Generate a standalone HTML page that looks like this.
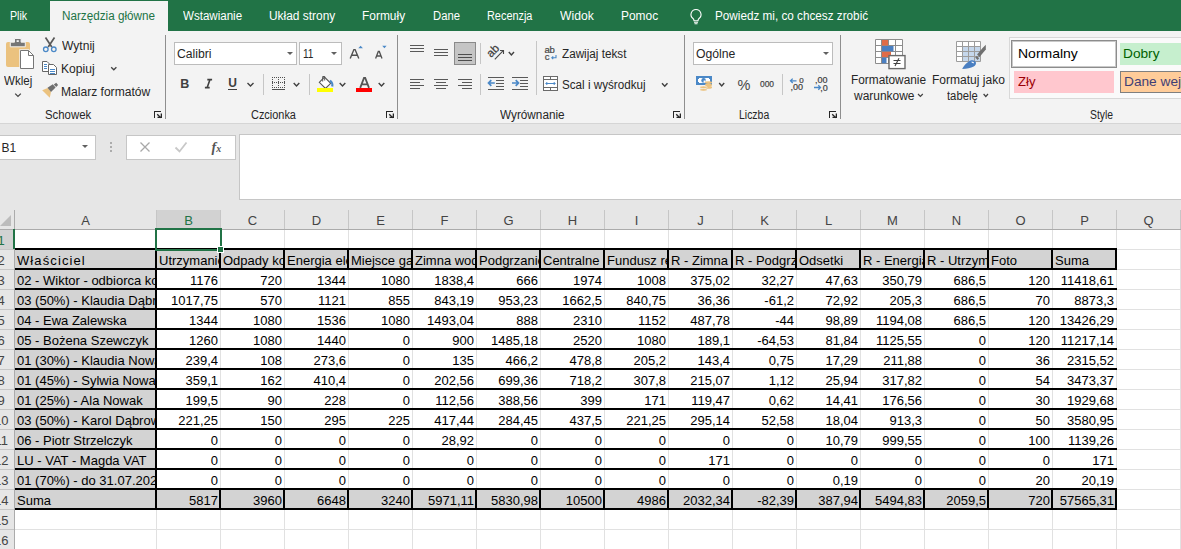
<!DOCTYPE html>
<html><head><meta charset="utf-8">
<style>
html,body{margin:0;padding:0}
body{width:1181px;height:549px;overflow:hidden;position:relative;background:#e6e6e6;font-family:"Liberation Sans", sans-serif;}
.a{position:absolute;white-space:nowrap}
</style></head><body>
<div class="a" style="left:0px;top:0px;width:1181px;height:31px;background:#217346;"></div>
<div class="a" style="left:50px;top:1px;width:118px;height:30px;background:#f3f3f3;"></div>
<div class="a" style="left:0px;top:31px;width:1181px;height:92px;background:#f3f3f3;"></div>
<div class="a" style="left:0px;top:123px;width:1181px;height:1px;background:#d5d5d5;"></div>
<div class="a" style="left:9.62px;top:9.84px;font-size:12px;line-height:12px;color:#ffffff;transform:scaleX(0.8900);transform-origin:0 0;">Plik</div>
<div class="a" style="left:62.20px;top:9.84px;font-size:12px;line-height:12px;color:#217346;transform:scaleX(0.9747);transform-origin:0 0;">Narzędzia główne</div>
<div class="a" style="left:182.59px;top:9.84px;font-size:12px;line-height:12px;color:#ffffff;transform:scaleX(0.9629);transform-origin:0 0;">Wstawianie</div>
<div class="a" style="left:268.79px;top:9.84px;font-size:12px;line-height:12px;color:#ffffff;transform:scaleX(0.9939);transform-origin:0 0;">Układ strony</div>
<div class="a" style="left:362.00px;top:9.84px;font-size:12px;line-height:12px;color:#ffffff;transform:scaleX(0.9955);transform-origin:0 0;">Formuły</div>
<div class="a" style="left:433.03px;top:9.84px;font-size:12px;line-height:12px;color:#ffffff;transform:scaleX(0.9393);transform-origin:0 0;">Dane</div>
<div class="a" style="left:487.23px;top:9.84px;font-size:12px;line-height:12px;color:#ffffff;transform:scaleX(0.9080);transform-origin:0 0;">Recenzja</div>
<div class="a" style="left:559.79px;top:9.84px;font-size:12px;line-height:12px;color:#ffffff;transform:scaleX(1.0118);transform-origin:0 0;">Widok</div>
<div class="a" style="left:621.00px;top:9.84px;font-size:12px;line-height:12px;color:#ffffff;transform:scaleX(0.9946);transform-origin:0 0;">Pomoc</div>
<svg class="a" style="left:688px;top:8px;" width="16" height="17" viewBox="0 0 16 17"><path d="M8 1.5a5 5 0 0 0-3 9c.8.7 1 1.4 1 2.3h4c0-.9.2-1.6 1-2.3a5 5 0 0 0-3-9z" fill="none" stroke="#fff" stroke-width="1.1"/><path d="M6 14.2h4M6.5 15.8h3" stroke="#fff" stroke-width="1.1"/></svg>
<div class="a" style="left:715.20px;top:9.84px;font-size:12px;line-height:12px;color:#ffffff;transform:scaleX(0.9769);transform-origin:0 0;">Powiedz mi, co chcesz zrobić</div>
<div class="a" style="left:165px;top:35px;width:1px;height:84px;background:#8e8e8e;"></div>
<div class="a" style="left:397px;top:35px;width:1px;height:84px;background:#8e8e8e;"></div>
<div class="a" style="left:684px;top:35px;width:1px;height:84px;background:#8e8e8e;"></div>
<div class="a" style="left:840px;top:35px;width:1px;height:84px;background:#8e8e8e;"></div>
<svg class="a" style="left:0px;top:34px" width="40" height="38" viewBox="0 34 40 38"><rect x="6" y="42" width="24" height="25" rx="2" fill="#ebc27f"/><path d="M10.3 46.8V42.2h4.2V38.5h6.6v3.7h4.2v4.6z" fill="#767676" stroke="#f3f3f3" stroke-width="1"/><rect x="16.6" y="40.2" width="2.2" height="1.8" fill="#f3f3f3"/><path d="M20.5 50.5h8l5 5v13h-13z" fill="#fff" stroke="#f3f3f3" stroke-width="2.4"/><path d="M20.5 50.5h8l5 5v13h-13z" fill="#fff" stroke="#767676"/><path d="M28.5 50.5v5h5" fill="none" stroke="#767676"/></svg>
<div class="a" style="left:4.17px;top:74.64px;font-size:12px;line-height:12px;color:#262626;transform:scaleX(0.9633);transform-origin:0 0;">Wklej</div>
<svg class="a" style="left:12px;top:90px" width="12" height="10" viewBox="12 90 12 10"><path d="M15.2 93.6l2.8 2.8 2.8-2.8" fill="none" stroke="#444" stroke-width="1.3"/></svg>
<svg class="a" style="left:40px;top:35px" width="20" height="20" viewBox="40 35 20 20"><path d="M45.5 37.5L51.8 47M54.5 37.5L48.2 47" stroke="#595959" stroke-width="1.7"/><circle cx="45.8" cy="49.3" r="2.3" fill="none" stroke="#4a88c7" stroke-width="1.3"/><circle cx="53.8" cy="49.3" r="2.3" fill="none" stroke="#4a88c7" stroke-width="1.3"/></svg>
<div class="a" style="left:62.00px;top:39.84px;font-size:12px;line-height:12px;color:#262626;transform:scaleX(1.0061);transform-origin:0 0;">Wytnij</div>
<svg class="a" style="left:40px;top:59px" width="20" height="19" viewBox="40 59 20 19"><path d="M42.5 61.5h4.5l2.5 2.5v7.5h-7z" fill="#fff" stroke="#666"/><path d="M44 64.5h3M44 66.5h3M44 68.5h3" stroke="#4a88c7"/><path d="M48.5 64.5h5l3 3v7h-8z" fill="#fff" stroke="#666"/><path d="M50 69.5h5M50 71.5h5M50 73.5h5" stroke="#4a88c7"/></svg>
<div class="a" style="left:61.00px;top:62.84px;font-size:12px;line-height:12px;color:#262626;transform:scaleX(1.0061);transform-origin:0 0;">Kopiuj</div>
<svg class="a" style="left:108px;top:64px" width="12" height="9" viewBox="108 64 12 9"><path d="M111.2 67.2l2.6 2.6 2.6-2.6" fill="none" stroke="#444" stroke-width="1.3"/></svg>
<svg class="a" style="left:40px;top:82px" width="20" height="18" viewBox="40 82 20 18"><path d="M42.2 90.2l5.5-2.2 3.3 3.8-1.2 6z" fill="#ebc27f"/><path d="M47.5 87.8l5.3-3.6 2.8 3.4-4.6 4.4z" fill="#6f6f6f"/><path d="M53.8 84.6l2.4-1.8 1.9 2.3-1.9 2z" fill="#6f6f6f"/></svg>
<div class="a" style="left:61.00px;top:85.64px;font-size:12px;line-height:12px;color:#262626;transform:scaleX(1.0056);transform-origin:0 0;">Malarz formatów</div>
<div class="a" style="left:45.43px;top:108.84px;font-size:12px;line-height:12px;color:#262626;transform:scaleX(0.9479);transform-origin:0 0;">Schowek</div>
<svg class="a" style="left:153px;top:110px" width="11" height="11" viewBox="153 110 11 11"><path d="M154 111h7v1h-6v6h-1z" fill="#262626"/><path d="M157.2 114.2L160.8 117.8" stroke="#262626" stroke-width="1.3"/><path d="M157.5 118h4.5v-4.5h-1.3v3.2h-3.2z" fill="#262626"/></svg>
<div class="a" style="left:174px;top:42px;width:123px;height:23px;background:#fff;border:1px solid #bcbcbc;box-sizing:border-box;"></div>
<div class="a" style="left:176.78px;top:47.84px;font-size:12px;line-height:12px;color:#262626;transform:scaleX(1.0152);transform-origin:0 0;">Calibri</div>
<svg class="a" style="left:285.5px;top:51px;" width="8" height="5" viewBox="0 0 8 5"><path d="M1 1h6l-3 3z" fill="#606060"/></svg>
<div class="a" style="left:299px;top:42px;width:43px;height:23px;background:#fff;border:1px solid #bcbcbc;box-sizing:border-box;"></div>
<div class="a" style="left:303.00px;top:47.84px;font-size:12px;line-height:12px;color:#262626;transform:scaleX(0.8417);transform-origin:0 0;">11</div>
<svg class="a" style="left:330px;top:51px;" width="8" height="5" viewBox="0 0 8 5"><path d="M1 1h6l-3 3z" fill="#606060"/></svg>
<svg class="a" style="left:346px;top:42px" width="46" height="20" viewBox="346 42 46 20"><path d="M350.2 58.6L353.9 49.6h1.2l3.7 9M351.7 55.3h5.6" fill="none" stroke="#505050" stroke-width="1.4"/><path d="M358.3 48.3l2.3-2.6 2.3 2.6z" fill="#4a88c7"/><path d="M375.6 58.6L378.3 51.4h1l2.7 7.2M376.8 56h4.2" fill="none" stroke="#505050" stroke-width="1.3"/><path d="M382.2 45.8h4.4l-2.2 2.4z" fill="#4a88c7"/></svg>
<div class="a" style="left:180.30px;top:77.62px;font-size:12.5px;line-height:12.5px;color:#404040;font-weight:bold">B</div>
<div class="a" style="left:0.00px;top:-10.16px;font-size:12px;line-height:12px;color:#262626;"></div>
<svg class="a" style="left:203px;top:77px" width="11" height="13" viewBox="203 77 11 13"><path d="M207.3 79.6h4.8M204.9 87.6h4.8M210 79.6L207.2 87.6" fill="none" stroke="#404040" stroke-width="1.6"/></svg>
<div class="a" style="left:228.20px;top:77.44px;font-size:12px;line-height:12px;color:#404040;font-weight:bold">U</div>
<div class="a" style="left:228px;top:89px;width:9px;height:1px;background:#404040;"></div>
<svg class="a" style="left:245px;top:81px" width="11" height="8" viewBox="245 81 11 8"><path d="M247.5 83L250.5 86L253.5 83" fill="none" stroke="#404040" stroke-width="1.4"/></svg>
<div class="a" style="left:263px;top:74px;width:1px;height:21px;background:#c6c6c6;"></div>
<svg class="a" style="left:270px;top:75px" width="18" height="17" viewBox="270 75 18 17"><rect x="272" y="77" width="1" height="1" fill="#505050"/><rect x="274" y="77" width="1" height="1" fill="#505050"/><rect x="276" y="77" width="1" height="1" fill="#505050"/><rect x="278" y="77" width="1" height="1" fill="#505050"/><rect x="280" y="77" width="1" height="1" fill="#505050"/><rect x="282" y="77" width="1" height="1" fill="#505050"/><rect x="284" y="77" width="1" height="1" fill="#505050"/><rect x="272" y="82" width="1" height="1" fill="#505050"/><rect x="274" y="82" width="1" height="1" fill="#505050"/><rect x="276" y="82" width="1" height="1" fill="#505050"/><rect x="278" y="82" width="1" height="1" fill="#505050"/><rect x="280" y="82" width="1" height="1" fill="#505050"/><rect x="282" y="82" width="1" height="1" fill="#505050"/><rect x="284" y="82" width="1" height="1" fill="#505050"/><rect x="272" y="87" width="1" height="1" fill="#505050"/><rect x="274" y="87" width="1" height="1" fill="#505050"/><rect x="276" y="87" width="1" height="1" fill="#505050"/><rect x="278" y="87" width="1" height="1" fill="#505050"/><rect x="280" y="87" width="1" height="1" fill="#505050"/><rect x="282" y="87" width="1" height="1" fill="#505050"/><rect x="284" y="87" width="1" height="1" fill="#505050"/><rect x="272" y="77" width="1" height="1" fill="#505050"/><rect x="272" y="79" width="1" height="1" fill="#505050"/><rect x="272" y="81" width="1" height="1" fill="#505050"/><rect x="272" y="83" width="1" height="1" fill="#505050"/><rect x="272" y="85" width="1" height="1" fill="#505050"/><rect x="272" y="87" width="1" height="1" fill="#505050"/><rect x="278" y="77" width="1" height="1" fill="#505050"/><rect x="278" y="79" width="1" height="1" fill="#505050"/><rect x="278" y="81" width="1" height="1" fill="#505050"/><rect x="278" y="83" width="1" height="1" fill="#505050"/><rect x="278" y="85" width="1" height="1" fill="#505050"/><rect x="278" y="87" width="1" height="1" fill="#505050"/><rect x="284" y="77" width="1" height="1" fill="#505050"/><rect x="284" y="79" width="1" height="1" fill="#505050"/><rect x="284" y="81" width="1" height="1" fill="#505050"/><rect x="284" y="83" width="1" height="1" fill="#505050"/><rect x="284" y="85" width="1" height="1" fill="#505050"/><rect x="284" y="87" width="1" height="1" fill="#505050"/><rect x="272" y="89" width="13" height="1" fill="#505050"/></svg>
<svg class="a" style="left:291px;top:81px" width="11" height="8" viewBox="291 81 11 8"><path d="M293.7 83L296.5 86L299.3 83" fill="none" stroke="#404040" stroke-width="1.4"/></svg>
<div class="a" style="left:309px;top:74px;width:1px;height:21px;background:#c6c6c6;"></div>
<svg class="a" style="left:315px;top:74px" width="21" height="19" viewBox="315 74 21 19"><path d="M319.3 82.3l5.2-5.2 6.2 6.2-5.2 5.2z" fill="#fff" stroke="#555" stroke-width="1.1"/><path d="M322.7 81.5V76.5h2v4" fill="none" stroke="#555" stroke-width="1"/><path d="M330 80.5q3 2.5 2.2 6" fill="none" stroke="#4a88c7" stroke-width="2.2"/><rect x="317" y="88" width="16" height="4" fill="#ffff00"/></svg>
<svg class="a" style="left:337px;top:81px" width="11" height="8" viewBox="337 81 11 8"><path d="M339.7 83L342.5 86L345.3 83" fill="none" stroke="#404040" stroke-width="1.4"/></svg>
<svg class="a" style="left:354px;top:74px" width="20" height="19" viewBox="354 74 20 19"><path d="M360.2 87.8L364 78h1.2l3.8 9.8M361.6 84.3h6" fill="none" stroke="#555" stroke-width="1.8"/><rect x="356" y="88" width="16" height="4" fill="#ff0000"/></svg>
<svg class="a" style="left:376px;top:81px" width="11" height="8" viewBox="376 81 11 8"><path d="M378.7 83L381.5 86L384.3 83" fill="none" stroke="#404040" stroke-width="1.4"/></svg>
<div class="a" style="left:250.57px;top:108.84px;font-size:12px;line-height:12px;color:#262626;transform:scaleX(0.9100);transform-origin:0 0;">Czcionka</div>
<svg class="a" style="left:385px;top:110px" width="11" height="11" viewBox="385 110 11 11"><path d="M386 111h7v1h-6v6h-1z" fill="#262626"/><path d="M389.2 114.2L392.8 117.8" stroke="#262626" stroke-width="1.3"/><path d="M389.5 118h4.5v-4.5h-1.3v3.2h-3.2z" fill="#262626"/></svg>
<div class="a" style="left:410px;top:45px;width:14px;height:1px;background:#595959"></div>
<div class="a" style="left:410px;top:48px;width:14px;height:1px;background:#595959"></div>
<div class="a" style="left:410px;top:51px;width:14px;height:1px;background:#595959"></div>
<div class="a" style="left:434px;top:49px;width:14px;height:1px;background:#595959"></div>
<div class="a" style="left:434px;top:52px;width:14px;height:1px;background:#595959"></div>
<div class="a" style="left:434px;top:55px;width:14px;height:1px;background:#595959"></div>
<div class="a" style="left:454px;top:42px;width:22px;height:23px;background:#c5c5c5;border:1px solid #8a8a8a;box-sizing:border-box;"></div>
<div class="a" style="left:458px;top:54px;width:14px;height:1px;background:#4d4d4d"></div>
<div class="a" style="left:458px;top:57px;width:14px;height:1px;background:#4d4d4d"></div>
<div class="a" style="left:458px;top:60px;width:14px;height:1px;background:#4d4d4d"></div>
<div class="a" style="left:480px;top:43px;width:1px;height:21px;background:#c6c6c6;"></div>
<svg class="a" style="left:484px;top:42px" width="34" height="22" viewBox="484 42 34 22"><g transform="translate(492.8 50.6) rotate(-45)"><text x="-6.5" y="4" font-family="Liberation Sans" font-size="11.5" fill="#404040" stroke="#404040" stroke-width="0.25">ab</text></g><path d="M494.8 59.3L503.2 50.7" stroke="#474747" stroke-width="1.1"/><path d="M500 50.5h3.5v3.5" fill="none" stroke="#474747" stroke-width="1.1"/></svg>
<svg class="a" style="left:506px;top:50px" width="11" height="8" viewBox="506 50 11 8"><path d="M508.8 52L511.4 55L514 52" fill="none" stroke="#404040" stroke-width="1.4"/></svg>
<div class="a" style="left:536px;top:41px;width:1px;height:54px;background:#c6c6c6;"></div>
<svg class="a" style="left:543px;top:44px" width="17" height="18" viewBox="543 44 17 18"><text x="544.6" y="52.6" font-family="Liberation Sans" font-size="9.5" fill="#474747" stroke="#474747" stroke-width="0.2" letter-spacing="-0.4">ab</text><text x="544.8" y="59.7" font-family="Liberation Sans" font-size="9.5" fill="#474747" stroke="#474747" stroke-width="0.2">c</text><path d="M556 55v2.8h-3.5M553.2 56.4l-1.4 1.4 1.4 1.4" fill="none" stroke="#4a88c7" stroke-width="1.1"/></svg>
<div class="a" style="left:562.19px;top:47.84px;font-size:12px;line-height:12px;color:#262626;transform:scaleX(0.9758);transform-origin:0 0;">Zawijaj tekst</div>
<div class="a" style="left:410px;top:79px;width:14px;height:1px;background:#595959"></div>
<div class="a" style="left:434px;top:79px;width:14px;height:1px;background:#595959"></div>
<div class="a" style="left:458px;top:79px;width:14px;height:1px;background:#595959"></div>
<div class="a" style="left:410px;top:82px;width:10px;height:1px;background:#595959"></div>
<div class="a" style="left:436px;top:82px;width:10px;height:1px;background:#595959"></div>
<div class="a" style="left:462px;top:82px;width:10px;height:1px;background:#595959"></div>
<div class="a" style="left:410px;top:85px;width:14px;height:1px;background:#595959"></div>
<div class="a" style="left:434px;top:85px;width:14px;height:1px;background:#595959"></div>
<div class="a" style="left:458px;top:85px;width:14px;height:1px;background:#595959"></div>
<div class="a" style="left:410px;top:88px;width:10px;height:1px;background:#595959"></div>
<div class="a" style="left:436px;top:88px;width:10px;height:1px;background:#595959"></div>
<div class="a" style="left:462px;top:88px;width:10px;height:1px;background:#595959"></div>
<div class="a" style="left:480px;top:74px;width:1px;height:21px;background:#c6c6c6;"></div>
<div class="a" style="left:488px;top:77px;width:16px;height:1px;background:#595959"></div>
<div class="a" style="left:496px;top:80px;width:8px;height:1px;background:#595959"></div>
<div class="a" style="left:496px;top:83px;width:8px;height:1px;background:#595959"></div>
<div class="a" style="left:496px;top:86px;width:8px;height:1px;background:#595959"></div>
<div class="a" style="left:488px;top:89px;width:16px;height:1px;background:#595959"></div>
<div class="a" style="left:512px;top:77px;width:16px;height:1px;background:#595959"></div>
<div class="a" style="left:520px;top:80px;width:8px;height:1px;background:#595959"></div>
<div class="a" style="left:520px;top:83px;width:8px;height:1px;background:#595959"></div>
<div class="a" style="left:520px;top:86px;width:8px;height:1px;background:#595959"></div>
<div class="a" style="left:512px;top:89px;width:16px;height:1px;background:#595959"></div>
<svg class="a" style="left:486px;top:76px" width="44" height="14" viewBox="486 76 44 14"><path d="M488.3 83h6.5M491.3 80.2L488.5 83l2.8 2.8" fill="none" stroke="#4a88c7" stroke-width="1.7"/><path d="M512 83h6.5M515.7 80.2l2.8 2.8-2.8 2.8" fill="none" stroke="#4a88c7" stroke-width="1.7"/></svg>
<svg class="a" style="left:541px;top:74px" width="20" height="19" viewBox="541 74 20 19"><rect x="543.5" y="76.5" width="14" height="14" fill="#fff" stroke="#6a6a6a"/><path d="M543.5 79.5h14M543.5 87.5h14M550.5 76.5v3M550.5 87.5v3" stroke="#6a6a6a"/><path d="M546 83.5h9M547.3 82l-1.5 1.5 1.5 1.5M553.7 82l1.5 1.5-1.5 1.5" fill="none" stroke="#4a88c7"/></svg>
<div class="a" style="left:562.19px;top:78.84px;font-size:12px;line-height:12px;color:#262626;transform:scaleX(0.9721);transform-origin:0 0;">Scal i wyśrodkuj</div>
<svg class="a" style="left:660px;top:81px" width="10" height="8" viewBox="660 81 10 8"><path d="M662 83.2L664.75 86.2L667.5 83.2" fill="none" stroke="#404040" stroke-width="1.4"/></svg>
<div class="a" style="left:500.00px;top:108.84px;font-size:12px;line-height:12px;color:#262626;transform:scaleX(0.9803);transform-origin:0 0;">Wyrównanie</div>
<svg class="a" style="left:672px;top:110px" width="11" height="11" viewBox="672 110 11 11"><path d="M673 111h7v1h-6v6h-1z" fill="#262626"/><path d="M676.2 114.2L679.8 117.8" stroke="#262626" stroke-width="1.3"/><path d="M676.5 118h4.5v-4.5h-1.3v3.2h-3.2z" fill="#262626"/></svg>
<div class="a" style="left:693px;top:42px;width:140px;height:23px;background:#fff;border:1px solid #bcbcbc;box-sizing:border-box;"></div>
<div class="a" style="left:695.78px;top:47.84px;font-size:12px;line-height:12px;color:#262626;transform:scaleX(1.0184);transform-origin:0 0;">Ogólne</div>
<svg class="a" style="left:821.5px;top:51px;" width="8" height="5" viewBox="0 0 8 5"><path d="M1 1h6l-3 3z" fill="#606060"/></svg>
<svg class="a" style="left:694px;top:74px" width="20" height="20" viewBox="694 74 20 20"><path d="M697 77h14v7h-14z" fill="#fff" stroke="#4a88c7" stroke-width="2"/><path d="M696 76h3v3h-3zM709 76h3v3h-3zM696 82h3v3h-3zM709 82h3v3h-3z" fill="#4a88c7"/><circle cx="703.6" cy="80.4" r="2.3" fill="#4a88c7"/><path d="M703.6 80.4h2.3a2.3 2.3 0 0 1-2.3 2.3z" fill="#fff"/><ellipse cx="708.5" cy="82.6" rx="3.6" ry="1.3" fill="#ebc27f"/><ellipse cx="708.5" cy="85" rx="3.6" ry="1.3" fill="#ebc27f"/><ellipse cx="708.5" cy="87.4" rx="3.6" ry="1.3" fill="#ebc27f"/><ellipse cx="703.5" cy="87.3" rx="3.6" ry="1.3" fill="#ebc27f" stroke="#f3f3f3" stroke-width=".6"/><ellipse cx="703.5" cy="89.8" rx="3.6" ry="1.3" fill="#ebc27f" stroke="#f3f3f3" stroke-width=".6"/></svg>
<svg class="a" style="left:717px;top:81px" width="10" height="8" viewBox="717 81 10 8"><path d="M719.2 83L721.7 86L724.2 83" fill="none" stroke="#404040" stroke-width="1.4"/></svg>
<div class="a" style="left:737.60px;top:77.63px;font-size:14.5px;line-height:14.5px;color:#474747;">%</div>
<div class="a" style="left:760.00px;top:78.90px;font-size:9.8px;line-height:9.8px;color:#474747;transform:scaleX(0.86);transform-origin:0 0;-webkit-text-stroke:0.25px #474747">000</div>
<div class="a" style="left:782px;top:74px;width:1px;height:21px;background:#c6c6c6;"></div>
<svg class="a" style="left:786px;top:74px" width="24" height="20" viewBox="786 74 24 20"><text x="799.3" y="83" font-family="Liberation Sans" font-size="8" fill="#404040" stroke="#404040" stroke-width="0.2">0</text><text x="790.6" y="90.4" font-family="Liberation Sans" font-size="9" fill="#404040" stroke="#404040" stroke-width="0.2">,00</text><path d="M790.5 80.8h6M792.7 78.6l-2.2 2.2 2.2 2.2" fill="none" stroke="#4a88c7" stroke-width="1.3"/></svg>
<svg class="a" style="left:810px;top:74px" width="24" height="20" viewBox="810 74 24 20"><text x="815" y="83" font-family="Liberation Sans" font-size="9" fill="#404040" stroke="#404040" stroke-width="0.2">,00</text><text x="820.2" y="90.6" font-family="Liberation Sans" font-size="9" fill="#404040" stroke="#404040" stroke-width="0.2">,0</text><path d="M814 87.5h6.3M818.3 85.3l2.2 2.2-2.2 2.2" fill="none" stroke="#4a88c7" stroke-width="1.3"/></svg>
<div class="a" style="left:738.87px;top:108.84px;font-size:12px;line-height:12px;color:#262626;transform:scaleX(0.8714);transform-origin:0 0;">Liczba</div>
<svg class="a" style="left:828px;top:110px" width="11" height="11" viewBox="828 110 11 11"><path d="M829 111h7v1h-6v6h-1z" fill="#262626"/><path d="M832.2 114.2L835.8 117.8" stroke="#262626" stroke-width="1.3"/><path d="M832.5 118h4.5v-4.5h-1.3v3.2h-3.2z" fill="#262626"/></svg>
<svg class="a" style="left:872px;top:36px" width="36" height="35" viewBox="872 36 36 35"><rect x="875.5" y="39.5" width="27" height="24" fill="#fff"/><path d="M875.5 39.5h27v24h-27zM875.5 45.5h27M875.5 51.5h27M875.5 57.5h27M881.5 39.5v24M888.5 39.5v24M895.5 39.5v24" fill="none" stroke="#8c8c8c"/><rect x="882" y="40" width="6" height="5.5" fill="#e06c47"/><rect x="882" y="46" width="11.5" height="5.3" fill="#4a7fc1"/><rect x="882" y="51.8" width="9" height="5.3" fill="#e06c47"/><rect x="882" y="57.6" width="4.5" height="5.6" fill="#4a7fc1"/><rect x="889" y="55.6" width="16" height="13" fill="#fff" stroke="#6a6a6a" stroke-width="1.4"/><path d="M893.5 60.5h7M893.5 63.5h7M899 58.3l-4 7.8" fill="none" stroke="#404040" stroke-width="1.1"/></svg>
<div class="a" style="left:851.39px;top:74.14px;font-size:12px;line-height:12px;color:#262626;transform:scaleX(0.9868);transform-origin:0 0;">Formatowanie</div>
<div class="a" style="left:853.79px;top:89.64px;font-size:12px;line-height:12px;color:#262626;transform:scaleX(0.9967);transform-origin:0 0;">warunkowe</div>
<svg class="a" style="left:916px;top:92px" width="9" height="7" viewBox="916 92 9 7"><path d="M918 94L920.4 96.5L922.8 94" fill="none" stroke="#404040" stroke-width="1.2"/></svg>
<svg class="a" style="left:954px;top:39px" width="34" height="32" viewBox="954 39 34 32"><rect x="956.5" y="41.5" width="24" height="20" fill="#fff"/><rect x="962.5" y="46.5" width="18" height="15" fill="#c5d7ec"/><path d="M956.5 41.5h24v20h-24zM956.5 46.5h24M956.5 51.5h24M956.5 56.5h24M962.5 41.5v20M968.5 41.5v20M974.5 41.5v20" fill="none" stroke="#9c9c9c"/><path d="M982.8 47.8l3-3v4.6l-6.3 7.6-2.4-2.4z" fill="#707070"/><path d="M975.2 57.5l1.6-1.6 2.4 2.4-1.6 1.6z" fill="#707070"/><path d="M962.2 69c1.6-3.2 4.8-7.4 8.6-8.6 2.2-.7 4.6.4 5.1 2 .4 1.3-.5 3.2-2.2 4.2-3 1.8-6.8 2.2-11.5 2.4z" fill="#4a7fc1"/><path d="M971.2 61.8c1.4-.4 2.6.2 2.9 1.2-1 .5-1.9.3-2.9-1.2z" fill="#fff"/></svg>
<div class="a" style="left:931.59px;top:74.14px;font-size:12px;line-height:12px;color:#262626;transform:scaleX(1.0028);transform-origin:0 0;">Formatuj jako</div>
<div class="a" style="left:947.00px;top:89.64px;font-size:12px;line-height:12px;color:#262626;transform:scaleX(0.9371);transform-origin:0 0;">tabelę</div>
<svg class="a" style="left:981px;top:92px" width="10" height="7" viewBox="981 92 10 7"><path d="M983.6 94L985.8 96.5L988 94" fill="none" stroke="#404040" stroke-width="1.2"/></svg>
<div class="a" style="left:1009px;top:37px;width:200px;height:62px;background:#fafafa;border:1px solid #d8d8d8;box-sizing:border-box;"></div>
<div class="a" style="left:1011px;top:40px;width:106px;height:28px;background:#fff;border:1px solid #8c8c8c;box-sizing:border-box;"></div>
<div class="a" style="left:1012px;top:41px;width:104px;height:26px;background:#fff;border:1px solid #c9c9c9;box-sizing:border-box;"></div>
<div class="a" style="left:1018.38px;top:47.07px;font-size:13.5px;line-height:13.5px;color:#000;transform:scaleX(1.0362);transform-origin:0 0;">Normalny</div>
<div class="a" style="left:1120px;top:43px;width:70px;height:22px;background:#c6efce;"></div>
<div class="a" style="left:1123.38px;top:47.07px;font-size:13.5px;line-height:13.5px;color:#006100;transform:scaleX(1.0139);transform-origin:0 0;">Dobry</div>
<div class="a" style="left:1014px;top:71px;width:100px;height:22px;background:#ffc7ce;"></div>
<div class="a" style="left:1018.19px;top:75.47px;font-size:13.5px;line-height:13.5px;color:#9c0006;transform:scaleX(0.9722);transform-origin:0 0;">Zły</div>
<div class="a" style="left:1120px;top:71px;width:70px;height:22px;background:#ffcc99;border:1px solid #7f7f7f;box-sizing:border-box;"></div>
<div class="a" style="left:1124.20px;top:75.47px;font-size:13.5px;line-height:13.5px;color:#3f3f76;transform:scaleX(1.014);transform-origin:0 0">Dane wejściowe</div>
<div class="a" style="left:1090.00px;top:108.84px;font-size:12px;line-height:12px;color:#262626;transform:scaleX(0.8630);transform-origin:0 0;">Style</div>
<div class="a" style="left:-1px;top:135px;width:97px;height:25px;background:#fff;border:1px solid #c6c6c6;box-sizing:border-box;"></div>
<div class="a" style="left:1.50px;top:142.14px;font-size:12px;line-height:12px;color:#262626;">B1</div>
<svg class="a" style="left:81px;top:143.5px;" width="8" height="5" viewBox="0 0 8 5"><path d="M1 1h6l-3 3z" fill="#606060"/></svg>
<svg class="a" style="left:109px;top:141px;" width="4" height="12" viewBox="0 0 4 12"><circle cx="2" cy="2" r="1" fill="#999"/><circle cx="2" cy="6" r="1" fill="#999"/><circle cx="2" cy="10" r="1" fill="#999"/></svg>
<div class="a" style="left:126px;top:135px;width:110px;height:25px;background:#fff;border:1px solid #c6c6c6;box-sizing:border-box;"></div>
<svg class="a" style="left:139px;top:141px;" width="12" height="12" viewBox="0 0 12 12"><path d="M1.5 1.5l9 9M10.5 1.5l-9 9" stroke="#a8a8a8" stroke-width="1.3"/></svg>
<svg class="a" style="left:174px;top:141px;" width="14" height="12" viewBox="0 0 14 12"><path d="M1.5 6.5l4 4 7-9" fill="none" stroke="#c8c8c8" stroke-width="1.8"/></svg>
<div class="a" style="left:211.50px;top:140.65px;font-size:14px;line-height:14px;color:#555;font-family:'Liberation Serif',serif"><i><b>f</b></i><span style="font-size:10px"><i><b>x</b></i></span></div>
<div class="a" style="left:239px;top:134px;width:1000px;height:66px;background:#fff;border:1px solid #c6c6c6;box-sizing:border-box;"></div>
<div id="grid" style="position:absolute;left:0;top:210px;width:1181px;height:339px;overflow:hidden;background:#fff">
<div style="position:absolute;left:0px;top:0px;width:1181px;height:19px;background:#e6e6e6"></div>
<div style="position:absolute;left:157px;top:0px;width:63px;height:19px;background:#d2d2d2"></div>
<div style="position:absolute;left:0px;top:19px;width:14px;height:320px;background:#e6e6e6"></div>
<div style="position:absolute;left:0px;top:20px;width:14px;height:19px;background:#d2d2d2"></div>
<div style="position:absolute;left:15px;top:40px;width:1101px;height:19px;background:#d3d3d3"></div>
<div style="position:absolute;left:15px;top:60px;width:141px;height:19px;background:#d3d3d3"></div>
<div style="position:absolute;left:15px;top:80px;width:141px;height:19px;background:#d3d3d3"></div>
<div style="position:absolute;left:15px;top:100px;width:141px;height:19px;background:#d3d3d3"></div>
<div style="position:absolute;left:15px;top:120px;width:141px;height:19px;background:#d3d3d3"></div>
<div style="position:absolute;left:15px;top:140px;width:141px;height:19px;background:#d3d3d3"></div>
<div style="position:absolute;left:15px;top:160px;width:141px;height:19px;background:#d3d3d3"></div>
<div style="position:absolute;left:15px;top:180px;width:141px;height:19px;background:#d3d3d3"></div>
<div style="position:absolute;left:15px;top:200px;width:141px;height:19px;background:#d3d3d3"></div>
<div style="position:absolute;left:15px;top:220px;width:141px;height:19px;background:#d3d3d3"></div>
<div style="position:absolute;left:15px;top:240px;width:141px;height:19px;background:#d3d3d3"></div>
<div style="position:absolute;left:15px;top:260px;width:141px;height:19px;background:#d3d3d3"></div>
<div style="position:absolute;left:15px;top:280px;width:1101px;height:19px;background:#d3d3d3"></div>
<div style="position:absolute;left:156px;top:19px;width:1px;height:320px;background:#e1e1e1"></div>
<div style="position:absolute;left:220px;top:19px;width:1px;height:320px;background:#e1e1e1"></div>
<div style="position:absolute;left:284px;top:19px;width:1px;height:320px;background:#e1e1e1"></div>
<div style="position:absolute;left:348px;top:19px;width:1px;height:320px;background:#e1e1e1"></div>
<div style="position:absolute;left:412px;top:19px;width:1px;height:320px;background:#e1e1e1"></div>
<div style="position:absolute;left:476px;top:19px;width:1px;height:320px;background:#e1e1e1"></div>
<div style="position:absolute;left:540px;top:19px;width:1px;height:320px;background:#e1e1e1"></div>
<div style="position:absolute;left:604px;top:19px;width:1px;height:320px;background:#e1e1e1"></div>
<div style="position:absolute;left:668px;top:19px;width:1px;height:320px;background:#e1e1e1"></div>
<div style="position:absolute;left:732px;top:19px;width:1px;height:320px;background:#e1e1e1"></div>
<div style="position:absolute;left:796px;top:19px;width:1px;height:320px;background:#e1e1e1"></div>
<div style="position:absolute;left:860px;top:19px;width:1px;height:320px;background:#e1e1e1"></div>
<div style="position:absolute;left:924px;top:19px;width:1px;height:320px;background:#e1e1e1"></div>
<div style="position:absolute;left:988px;top:19px;width:1px;height:320px;background:#e1e1e1"></div>
<div style="position:absolute;left:1052px;top:19px;width:1px;height:320px;background:#e1e1e1"></div>
<div style="position:absolute;left:1116px;top:19px;width:1px;height:320px;background:#e1e1e1"></div>
<div style="position:absolute;left:1180px;top:19px;width:1px;height:320px;background:#e1e1e1"></div>
<div style="position:absolute;left:15px;top:39px;width:1166px;height:1px;background:#e1e1e1"></div>
<div style="position:absolute;left:15px;top:59px;width:1166px;height:1px;background:#e1e1e1"></div>
<div style="position:absolute;left:15px;top:79px;width:1166px;height:1px;background:#e1e1e1"></div>
<div style="position:absolute;left:15px;top:99px;width:1166px;height:1px;background:#e1e1e1"></div>
<div style="position:absolute;left:15px;top:119px;width:1166px;height:1px;background:#e1e1e1"></div>
<div style="position:absolute;left:15px;top:139px;width:1166px;height:1px;background:#e1e1e1"></div>
<div style="position:absolute;left:15px;top:159px;width:1166px;height:1px;background:#e1e1e1"></div>
<div style="position:absolute;left:15px;top:179px;width:1166px;height:1px;background:#e1e1e1"></div>
<div style="position:absolute;left:15px;top:199px;width:1166px;height:1px;background:#e1e1e1"></div>
<div style="position:absolute;left:15px;top:219px;width:1166px;height:1px;background:#e1e1e1"></div>
<div style="position:absolute;left:15px;top:239px;width:1166px;height:1px;background:#e1e1e1"></div>
<div style="position:absolute;left:15px;top:259px;width:1166px;height:1px;background:#e1e1e1"></div>
<div style="position:absolute;left:15px;top:279px;width:1166px;height:1px;background:#e1e1e1"></div>
<div style="position:absolute;left:15px;top:299px;width:1166px;height:1px;background:#e1e1e1"></div>
<div style="position:absolute;left:15px;top:319px;width:1166px;height:1px;background:#e1e1e1"></div>
<div style="position:absolute;left:15px;top:339px;width:1166px;height:1px;background:#e1e1e1"></div>
<div style="position:absolute;left:156px;top:0px;width:1px;height:19px;background:#c6c6c6"></div>
<div style="position:absolute;left:220px;top:0px;width:1px;height:19px;background:#c6c6c6"></div>
<div style="position:absolute;left:284px;top:0px;width:1px;height:19px;background:#c6c6c6"></div>
<div style="position:absolute;left:348px;top:0px;width:1px;height:19px;background:#c6c6c6"></div>
<div style="position:absolute;left:412px;top:0px;width:1px;height:19px;background:#c6c6c6"></div>
<div style="position:absolute;left:476px;top:0px;width:1px;height:19px;background:#c6c6c6"></div>
<div style="position:absolute;left:540px;top:0px;width:1px;height:19px;background:#c6c6c6"></div>
<div style="position:absolute;left:604px;top:0px;width:1px;height:19px;background:#c6c6c6"></div>
<div style="position:absolute;left:668px;top:0px;width:1px;height:19px;background:#c6c6c6"></div>
<div style="position:absolute;left:732px;top:0px;width:1px;height:19px;background:#c6c6c6"></div>
<div style="position:absolute;left:796px;top:0px;width:1px;height:19px;background:#c6c6c6"></div>
<div style="position:absolute;left:860px;top:0px;width:1px;height:19px;background:#c6c6c6"></div>
<div style="position:absolute;left:924px;top:0px;width:1px;height:19px;background:#c6c6c6"></div>
<div style="position:absolute;left:988px;top:0px;width:1px;height:19px;background:#c6c6c6"></div>
<div style="position:absolute;left:1052px;top:0px;width:1px;height:19px;background:#c6c6c6"></div>
<div style="position:absolute;left:1116px;top:0px;width:1px;height:19px;background:#c6c6c6"></div>
<div style="position:absolute;left:1180px;top:0px;width:1px;height:19px;background:#c6c6c6"></div>
<div style="position:absolute;left:0px;top:19px;width:1181px;height:1px;background:#ababab"></div>
<div style="position:absolute;left:14px;top:0px;width:1px;height:339px;background:#ababab"></div>
<div style="position:absolute;left:0px;top:39px;width:14px;height:1px;background:#c6c6c6"></div>
<div style="position:absolute;left:0px;top:59px;width:14px;height:1px;background:#c6c6c6"></div>
<div style="position:absolute;left:0px;top:79px;width:14px;height:1px;background:#c6c6c6"></div>
<div style="position:absolute;left:0px;top:99px;width:14px;height:1px;background:#c6c6c6"></div>
<div style="position:absolute;left:0px;top:119px;width:14px;height:1px;background:#c6c6c6"></div>
<div style="position:absolute;left:0px;top:139px;width:14px;height:1px;background:#c6c6c6"></div>
<div style="position:absolute;left:0px;top:159px;width:14px;height:1px;background:#c6c6c6"></div>
<div style="position:absolute;left:0px;top:179px;width:14px;height:1px;background:#c6c6c6"></div>
<div style="position:absolute;left:0px;top:199px;width:14px;height:1px;background:#c6c6c6"></div>
<div style="position:absolute;left:0px;top:219px;width:14px;height:1px;background:#c6c6c6"></div>
<div style="position:absolute;left:0px;top:239px;width:14px;height:1px;background:#c6c6c6"></div>
<div style="position:absolute;left:0px;top:259px;width:14px;height:1px;background:#c6c6c6"></div>
<div style="position:absolute;left:0px;top:279px;width:14px;height:1px;background:#c6c6c6"></div>
<div style="position:absolute;left:0px;top:299px;width:14px;height:1px;background:#c6c6c6"></div>
<div style="position:absolute;left:0px;top:319px;width:14px;height:1px;background:#c6c6c6"></div>
<div style="position:absolute;left:0px;top:339px;width:14px;height:1px;background:#c6c6c6"></div>
<div style="position:absolute;left:15px;top:38px;width:1102px;height:2px;background:#000"></div>
<div style="position:absolute;left:15px;top:58px;width:1102px;height:2px;background:#000"></div>
<div style="position:absolute;left:15px;top:78px;width:1102px;height:2px;background:#000"></div>
<div style="position:absolute;left:15px;top:98px;width:1102px;height:2px;background:#000"></div>
<div style="position:absolute;left:15px;top:118px;width:1102px;height:2px;background:#000"></div>
<div style="position:absolute;left:15px;top:138px;width:1102px;height:2px;background:#000"></div>
<div style="position:absolute;left:15px;top:158px;width:1102px;height:2px;background:#000"></div>
<div style="position:absolute;left:15px;top:178px;width:1102px;height:2px;background:#000"></div>
<div style="position:absolute;left:15px;top:198px;width:1102px;height:2px;background:#000"></div>
<div style="position:absolute;left:15px;top:218px;width:1102px;height:2px;background:#000"></div>
<div style="position:absolute;left:15px;top:238px;width:1102px;height:2px;background:#000"></div>
<div style="position:absolute;left:15px;top:258px;width:1102px;height:2px;background:#000"></div>
<div style="position:absolute;left:15px;top:278px;width:1102px;height:2px;background:#000"></div>
<div style="position:absolute;left:15px;top:298px;width:1102px;height:2px;background:#000"></div>
<div style="position:absolute;left:155px;top:38px;width:2px;height:262px;background:#000"></div>
<div style="position:absolute;left:219px;top:38px;width:2px;height:22px;background:#000"></div>
<div style="position:absolute;left:283px;top:38px;width:2px;height:22px;background:#000"></div>
<div style="position:absolute;left:347px;top:38px;width:2px;height:22px;background:#000"></div>
<div style="position:absolute;left:411px;top:38px;width:2px;height:22px;background:#000"></div>
<div style="position:absolute;left:475px;top:38px;width:2px;height:22px;background:#000"></div>
<div style="position:absolute;left:539px;top:38px;width:2px;height:22px;background:#000"></div>
<div style="position:absolute;left:603px;top:38px;width:2px;height:22px;background:#000"></div>
<div style="position:absolute;left:667px;top:38px;width:2px;height:22px;background:#000"></div>
<div style="position:absolute;left:731px;top:38px;width:2px;height:22px;background:#000"></div>
<div style="position:absolute;left:795px;top:38px;width:2px;height:22px;background:#000"></div>
<div style="position:absolute;left:859px;top:38px;width:2px;height:22px;background:#000"></div>
<div style="position:absolute;left:923px;top:38px;width:2px;height:22px;background:#000"></div>
<div style="position:absolute;left:987px;top:38px;width:2px;height:22px;background:#000"></div>
<div style="position:absolute;left:1051px;top:38px;width:2px;height:22px;background:#000"></div>
<div style="position:absolute;left:1115px;top:38px;width:2px;height:22px;background:#000"></div>
<div style="position:absolute;left:219px;top:278px;width:2px;height:22px;background:#000"></div>
<div style="position:absolute;left:283px;top:278px;width:2px;height:22px;background:#000"></div>
<div style="position:absolute;left:347px;top:278px;width:2px;height:22px;background:#000"></div>
<div style="position:absolute;left:411px;top:278px;width:2px;height:22px;background:#000"></div>
<div style="position:absolute;left:475px;top:278px;width:2px;height:22px;background:#000"></div>
<div style="position:absolute;left:539px;top:278px;width:2px;height:22px;background:#000"></div>
<div style="position:absolute;left:603px;top:278px;width:2px;height:22px;background:#000"></div>
<div style="position:absolute;left:667px;top:278px;width:2px;height:22px;background:#000"></div>
<div style="position:absolute;left:731px;top:278px;width:2px;height:22px;background:#000"></div>
<div style="position:absolute;left:795px;top:278px;width:2px;height:22px;background:#000"></div>
<div style="position:absolute;left:859px;top:278px;width:2px;height:22px;background:#000"></div>
<div style="position:absolute;left:923px;top:278px;width:2px;height:22px;background:#000"></div>
<div style="position:absolute;left:987px;top:278px;width:2px;height:22px;background:#000"></div>
<div style="position:absolute;left:1051px;top:278px;width:2px;height:22px;background:#000"></div>
<div style="position:absolute;left:1115px;top:278px;width:2px;height:22px;background:#000"></div>
<div style="position:absolute;left:15px;top:1px;width:141px;height:20px;line-height:20px;font-size:13px;color:#444;text-align:center;white-space:nowrap;overflow:hidden;line-height:19px">A</div>
<div style="position:absolute;left:157px;top:1px;width:63px;height:20px;line-height:20px;font-size:13px;color:#217346;text-align:center;white-space:nowrap;overflow:hidden;line-height:19px">B</div>
<div style="position:absolute;left:221px;top:1px;width:63px;height:20px;line-height:20px;font-size:13px;color:#444;text-align:center;white-space:nowrap;overflow:hidden;line-height:19px">C</div>
<div style="position:absolute;left:285px;top:1px;width:63px;height:20px;line-height:20px;font-size:13px;color:#444;text-align:center;white-space:nowrap;overflow:hidden;line-height:19px">D</div>
<div style="position:absolute;left:349px;top:1px;width:63px;height:20px;line-height:20px;font-size:13px;color:#444;text-align:center;white-space:nowrap;overflow:hidden;line-height:19px">E</div>
<div style="position:absolute;left:413px;top:1px;width:63px;height:20px;line-height:20px;font-size:13px;color:#444;text-align:center;white-space:nowrap;overflow:hidden;line-height:19px">F</div>
<div style="position:absolute;left:477px;top:1px;width:63px;height:20px;line-height:20px;font-size:13px;color:#444;text-align:center;white-space:nowrap;overflow:hidden;line-height:19px">G</div>
<div style="position:absolute;left:541px;top:1px;width:63px;height:20px;line-height:20px;font-size:13px;color:#444;text-align:center;white-space:nowrap;overflow:hidden;line-height:19px">H</div>
<div style="position:absolute;left:605px;top:1px;width:63px;height:20px;line-height:20px;font-size:13px;color:#444;text-align:center;white-space:nowrap;overflow:hidden;line-height:19px">I</div>
<div style="position:absolute;left:669px;top:1px;width:63px;height:20px;line-height:20px;font-size:13px;color:#444;text-align:center;white-space:nowrap;overflow:hidden;line-height:19px">J</div>
<div style="position:absolute;left:733px;top:1px;width:63px;height:20px;line-height:20px;font-size:13px;color:#444;text-align:center;white-space:nowrap;overflow:hidden;line-height:19px">K</div>
<div style="position:absolute;left:797px;top:1px;width:63px;height:20px;line-height:20px;font-size:13px;color:#444;text-align:center;white-space:nowrap;overflow:hidden;line-height:19px">L</div>
<div style="position:absolute;left:861px;top:1px;width:63px;height:20px;line-height:20px;font-size:13px;color:#444;text-align:center;white-space:nowrap;overflow:hidden;line-height:19px">M</div>
<div style="position:absolute;left:925px;top:1px;width:63px;height:20px;line-height:20px;font-size:13px;color:#444;text-align:center;white-space:nowrap;overflow:hidden;line-height:19px">N</div>
<div style="position:absolute;left:989px;top:1px;width:63px;height:20px;line-height:20px;font-size:13px;color:#444;text-align:center;white-space:nowrap;overflow:hidden;line-height:19px">O</div>
<div style="position:absolute;left:1053px;top:1px;width:63px;height:20px;line-height:20px;font-size:13px;color:#444;text-align:center;white-space:nowrap;overflow:hidden;line-height:19px">P</div>
<div style="position:absolute;left:1117px;top:1px;width:63px;height:20px;line-height:20px;font-size:13px;color:#444;text-align:center;white-space:nowrap;overflow:hidden;line-height:19px">Q</div>
<div style="position:absolute;left:-7.8px;top:21px;width:18px;height:20px;line-height:20px;font-size:13px;color:#217346;text-align:center;white-space:nowrap;overflow:hidden;line-height:19px">1</div>
<div style="position:absolute;left:-7.8px;top:41px;width:18px;height:20px;line-height:20px;font-size:13px;color:#444;text-align:center;white-space:nowrap;overflow:hidden;line-height:19px">2</div>
<div style="position:absolute;left:-7.8px;top:61px;width:18px;height:20px;line-height:20px;font-size:13px;color:#444;text-align:center;white-space:nowrap;overflow:hidden;line-height:19px">3</div>
<div style="position:absolute;left:-7.8px;top:81px;width:18px;height:20px;line-height:20px;font-size:13px;color:#444;text-align:center;white-space:nowrap;overflow:hidden;line-height:19px">4</div>
<div style="position:absolute;left:-7.8px;top:101px;width:18px;height:20px;line-height:20px;font-size:13px;color:#444;text-align:center;white-space:nowrap;overflow:hidden;line-height:19px">5</div>
<div style="position:absolute;left:-7.8px;top:121px;width:18px;height:20px;line-height:20px;font-size:13px;color:#444;text-align:center;white-space:nowrap;overflow:hidden;line-height:19px">6</div>
<div style="position:absolute;left:-7.8px;top:141px;width:18px;height:20px;line-height:20px;font-size:13px;color:#444;text-align:center;white-space:nowrap;overflow:hidden;line-height:19px">7</div>
<div style="position:absolute;left:-7.8px;top:161px;width:18px;height:20px;line-height:20px;font-size:13px;color:#444;text-align:center;white-space:nowrap;overflow:hidden;line-height:19px">8</div>
<div style="position:absolute;left:-7.8px;top:181px;width:18px;height:20px;line-height:20px;font-size:13px;color:#444;text-align:center;white-space:nowrap;overflow:hidden;line-height:19px">9</div>
<div style="position:absolute;left:-7.8px;top:201px;width:18px;height:20px;line-height:20px;font-size:13px;color:#444;text-align:center;white-space:nowrap;overflow:hidden;line-height:19px">10</div>
<div style="position:absolute;left:-7.8px;top:221px;width:18px;height:20px;line-height:20px;font-size:13px;color:#444;text-align:center;white-space:nowrap;overflow:hidden;line-height:19px">11</div>
<div style="position:absolute;left:-7.8px;top:241px;width:18px;height:20px;line-height:20px;font-size:13px;color:#444;text-align:center;white-space:nowrap;overflow:hidden;line-height:19px">12</div>
<div style="position:absolute;left:-7.8px;top:261px;width:18px;height:20px;line-height:20px;font-size:13px;color:#444;text-align:center;white-space:nowrap;overflow:hidden;line-height:19px">13</div>
<div style="position:absolute;left:-7.8px;top:281px;width:18px;height:20px;line-height:20px;font-size:13px;color:#444;text-align:center;white-space:nowrap;overflow:hidden;line-height:19px">14</div>
<div style="position:absolute;left:-7.8px;top:301px;width:18px;height:20px;line-height:20px;font-size:13px;color:#444;text-align:center;white-space:nowrap;overflow:hidden;line-height:19px">15</div>
<div style="position:absolute;left:-7.8px;top:321px;width:18px;height:20px;line-height:20px;font-size:13px;color:#444;text-align:center;white-space:nowrap;overflow:hidden;line-height:19px">16</div>
<div style="position:absolute;left:17px;top:41px;width:138px;height:20px;line-height:20px;font-size:13px;color:#000;text-align:left;white-space:nowrap;overflow:hidden;line-height:19px;letter-spacing:1.1px">Właściciel</div>
<div style="position:absolute;left:159px;top:41px;width:60px;height:20px;line-height:20px;font-size:13px;color:#000;text-align:left;white-space:nowrap;overflow:hidden;line-height:19px">Utrzymanie</div>
<div style="position:absolute;left:223px;top:41px;width:60px;height:20px;line-height:20px;font-size:13px;color:#000;text-align:left;white-space:nowrap;overflow:hidden;line-height:19px">Odpady komunalne</div>
<div style="position:absolute;left:287px;top:41px;width:60px;height:20px;line-height:20px;font-size:13px;color:#000;text-align:left;white-space:nowrap;overflow:hidden;line-height:19px">Energia elektryczna</div>
<div style="position:absolute;left:351px;top:41px;width:60px;height:20px;line-height:20px;font-size:13px;color:#000;text-align:left;white-space:nowrap;overflow:hidden;line-height:19px">Miejsce garażowe</div>
<div style="position:absolute;left:415px;top:41px;width:60px;height:20px;line-height:20px;font-size:13px;color:#000;text-align:left;white-space:nowrap;overflow:hidden;line-height:19px">Zimna woda</div>
<div style="position:absolute;left:479px;top:41px;width:60px;height:20px;line-height:20px;font-size:13px;color:#000;text-align:left;white-space:nowrap;overflow:hidden;line-height:19px">Podgrzanie wody</div>
<div style="position:absolute;left:543px;top:41px;width:60px;height:20px;line-height:20px;font-size:13px;color:#000;text-align:left;white-space:nowrap;overflow:hidden;line-height:19px">Centralne ogrzewanie</div>
<div style="position:absolute;left:607px;top:41px;width:60px;height:20px;line-height:20px;font-size:13px;color:#000;text-align:left;white-space:nowrap;overflow:hidden;line-height:19px">Fundusz remontowy</div>
<div style="position:absolute;left:671px;top:41px;width:60px;height:20px;line-height:20px;font-size:13px;color:#000;text-align:left;white-space:nowrap;overflow:hidden;line-height:19px">R - Zimna woda</div>
<div style="position:absolute;left:735px;top:41px;width:60px;height:20px;line-height:20px;font-size:13px;color:#000;text-align:left;white-space:nowrap;overflow:hidden;line-height:19px">R - Podgrzanie</div>
<div style="position:absolute;left:799px;top:41px;width:60px;height:20px;line-height:20px;font-size:13px;color:#000;text-align:left;white-space:nowrap;overflow:hidden;line-height:19px">Odsetki</div>
<div style="position:absolute;left:863px;top:41px;width:60px;height:20px;line-height:20px;font-size:13px;color:#000;text-align:left;white-space:nowrap;overflow:hidden;line-height:19px">R - Energia</div>
<div style="position:absolute;left:927px;top:41px;width:60px;height:20px;line-height:20px;font-size:13px;color:#000;text-align:left;white-space:nowrap;overflow:hidden;line-height:19px">R - Utrzymanie</div>
<div style="position:absolute;left:991px;top:41px;width:60px;height:20px;line-height:20px;font-size:13px;color:#000;text-align:left;white-space:nowrap;overflow:hidden;line-height:19px">Foto</div>
<div style="position:absolute;left:1055px;top:41px;width:60px;height:20px;line-height:20px;font-size:13px;color:#000;text-align:left;white-space:nowrap;overflow:hidden;line-height:19px">Suma</div>
<div style="position:absolute;left:17px;top:61px;width:138px;height:20px;line-height:20px;font-size:13px;color:#000;text-align:left;white-space:nowrap;overflow:hidden;line-height:19px">02 - Wiktor - odbiorca końcowy</div>
<div style="position:absolute;left:157px;top:61px;width:61px;height:20px;line-height:20px;font-size:13px;color:#000;text-align:right;white-space:nowrap;overflow:hidden;line-height:19px">1176</div>
<div style="position:absolute;left:221px;top:61px;width:61px;height:20px;line-height:20px;font-size:13px;color:#000;text-align:right;white-space:nowrap;overflow:hidden;line-height:19px">720</div>
<div style="position:absolute;left:285px;top:61px;width:61px;height:20px;line-height:20px;font-size:13px;color:#000;text-align:right;white-space:nowrap;overflow:hidden;line-height:19px">1344</div>
<div style="position:absolute;left:349px;top:61px;width:61px;height:20px;line-height:20px;font-size:13px;color:#000;text-align:right;white-space:nowrap;overflow:hidden;line-height:19px">1080</div>
<div style="position:absolute;left:413px;top:61px;width:61px;height:20px;line-height:20px;font-size:13px;color:#000;text-align:right;white-space:nowrap;overflow:hidden;line-height:19px">1838,4</div>
<div style="position:absolute;left:477px;top:61px;width:61px;height:20px;line-height:20px;font-size:13px;color:#000;text-align:right;white-space:nowrap;overflow:hidden;line-height:19px">666</div>
<div style="position:absolute;left:541px;top:61px;width:61px;height:20px;line-height:20px;font-size:13px;color:#000;text-align:right;white-space:nowrap;overflow:hidden;line-height:19px">1974</div>
<div style="position:absolute;left:605px;top:61px;width:61px;height:20px;line-height:20px;font-size:13px;color:#000;text-align:right;white-space:nowrap;overflow:hidden;line-height:19px">1008</div>
<div style="position:absolute;left:669px;top:61px;width:61px;height:20px;line-height:20px;font-size:13px;color:#000;text-align:right;white-space:nowrap;overflow:hidden;line-height:19px">375,02</div>
<div style="position:absolute;left:733px;top:61px;width:61px;height:20px;line-height:20px;font-size:13px;color:#000;text-align:right;white-space:nowrap;overflow:hidden;line-height:19px">32,27</div>
<div style="position:absolute;left:797px;top:61px;width:61px;height:20px;line-height:20px;font-size:13px;color:#000;text-align:right;white-space:nowrap;overflow:hidden;line-height:19px">47,63</div>
<div style="position:absolute;left:861px;top:61px;width:61px;height:20px;line-height:20px;font-size:13px;color:#000;text-align:right;white-space:nowrap;overflow:hidden;line-height:19px">350,79</div>
<div style="position:absolute;left:925px;top:61px;width:61px;height:20px;line-height:20px;font-size:13px;color:#000;text-align:right;white-space:nowrap;overflow:hidden;line-height:19px">686,5</div>
<div style="position:absolute;left:989px;top:61px;width:61px;height:20px;line-height:20px;font-size:13px;color:#000;text-align:right;white-space:nowrap;overflow:hidden;line-height:19px">120</div>
<div style="position:absolute;left:1053px;top:61px;width:61px;height:20px;line-height:20px;font-size:13px;color:#000;text-align:right;white-space:nowrap;overflow:hidden;line-height:19px">11418,61</div>
<div style="position:absolute;left:17px;top:81px;width:138px;height:20px;line-height:20px;font-size:13px;color:#000;text-align:left;white-space:nowrap;overflow:hidden;line-height:19px">03 (50%) - Klaudia Dąbrowska</div>
<div style="position:absolute;left:157px;top:81px;width:61px;height:20px;line-height:20px;font-size:13px;color:#000;text-align:right;white-space:nowrap;overflow:hidden;line-height:19px">1017,75</div>
<div style="position:absolute;left:221px;top:81px;width:61px;height:20px;line-height:20px;font-size:13px;color:#000;text-align:right;white-space:nowrap;overflow:hidden;line-height:19px">570</div>
<div style="position:absolute;left:285px;top:81px;width:61px;height:20px;line-height:20px;font-size:13px;color:#000;text-align:right;white-space:nowrap;overflow:hidden;line-height:19px">1121</div>
<div style="position:absolute;left:349px;top:81px;width:61px;height:20px;line-height:20px;font-size:13px;color:#000;text-align:right;white-space:nowrap;overflow:hidden;line-height:19px">855</div>
<div style="position:absolute;left:413px;top:81px;width:61px;height:20px;line-height:20px;font-size:13px;color:#000;text-align:right;white-space:nowrap;overflow:hidden;line-height:19px">843,19</div>
<div style="position:absolute;left:477px;top:81px;width:61px;height:20px;line-height:20px;font-size:13px;color:#000;text-align:right;white-space:nowrap;overflow:hidden;line-height:19px">953,23</div>
<div style="position:absolute;left:541px;top:81px;width:61px;height:20px;line-height:20px;font-size:13px;color:#000;text-align:right;white-space:nowrap;overflow:hidden;line-height:19px">1662,5</div>
<div style="position:absolute;left:605px;top:81px;width:61px;height:20px;line-height:20px;font-size:13px;color:#000;text-align:right;white-space:nowrap;overflow:hidden;line-height:19px">840,75</div>
<div style="position:absolute;left:669px;top:81px;width:61px;height:20px;line-height:20px;font-size:13px;color:#000;text-align:right;white-space:nowrap;overflow:hidden;line-height:19px">36,36</div>
<div style="position:absolute;left:733px;top:81px;width:61px;height:20px;line-height:20px;font-size:13px;color:#000;text-align:right;white-space:nowrap;overflow:hidden;line-height:19px">-61,2</div>
<div style="position:absolute;left:797px;top:81px;width:61px;height:20px;line-height:20px;font-size:13px;color:#000;text-align:right;white-space:nowrap;overflow:hidden;line-height:19px">72,92</div>
<div style="position:absolute;left:861px;top:81px;width:61px;height:20px;line-height:20px;font-size:13px;color:#000;text-align:right;white-space:nowrap;overflow:hidden;line-height:19px">205,3</div>
<div style="position:absolute;left:925px;top:81px;width:61px;height:20px;line-height:20px;font-size:13px;color:#000;text-align:right;white-space:nowrap;overflow:hidden;line-height:19px">686,5</div>
<div style="position:absolute;left:989px;top:81px;width:61px;height:20px;line-height:20px;font-size:13px;color:#000;text-align:right;white-space:nowrap;overflow:hidden;line-height:19px">70</div>
<div style="position:absolute;left:1053px;top:81px;width:61px;height:20px;line-height:20px;font-size:13px;color:#000;text-align:right;white-space:nowrap;overflow:hidden;line-height:19px">8873,3</div>
<div style="position:absolute;left:17px;top:101px;width:138px;height:20px;line-height:20px;font-size:13px;color:#000;text-align:left;white-space:nowrap;overflow:hidden;line-height:19px">04 - Ewa Zalewska</div>
<div style="position:absolute;left:157px;top:101px;width:61px;height:20px;line-height:20px;font-size:13px;color:#000;text-align:right;white-space:nowrap;overflow:hidden;line-height:19px">1344</div>
<div style="position:absolute;left:221px;top:101px;width:61px;height:20px;line-height:20px;font-size:13px;color:#000;text-align:right;white-space:nowrap;overflow:hidden;line-height:19px">1080</div>
<div style="position:absolute;left:285px;top:101px;width:61px;height:20px;line-height:20px;font-size:13px;color:#000;text-align:right;white-space:nowrap;overflow:hidden;line-height:19px">1536</div>
<div style="position:absolute;left:349px;top:101px;width:61px;height:20px;line-height:20px;font-size:13px;color:#000;text-align:right;white-space:nowrap;overflow:hidden;line-height:19px">1080</div>
<div style="position:absolute;left:413px;top:101px;width:61px;height:20px;line-height:20px;font-size:13px;color:#000;text-align:right;white-space:nowrap;overflow:hidden;line-height:19px">1493,04</div>
<div style="position:absolute;left:477px;top:101px;width:61px;height:20px;line-height:20px;font-size:13px;color:#000;text-align:right;white-space:nowrap;overflow:hidden;line-height:19px">888</div>
<div style="position:absolute;left:541px;top:101px;width:61px;height:20px;line-height:20px;font-size:13px;color:#000;text-align:right;white-space:nowrap;overflow:hidden;line-height:19px">2310</div>
<div style="position:absolute;left:605px;top:101px;width:61px;height:20px;line-height:20px;font-size:13px;color:#000;text-align:right;white-space:nowrap;overflow:hidden;line-height:19px">1152</div>
<div style="position:absolute;left:669px;top:101px;width:61px;height:20px;line-height:20px;font-size:13px;color:#000;text-align:right;white-space:nowrap;overflow:hidden;line-height:19px">487,78</div>
<div style="position:absolute;left:733px;top:101px;width:61px;height:20px;line-height:20px;font-size:13px;color:#000;text-align:right;white-space:nowrap;overflow:hidden;line-height:19px">-44</div>
<div style="position:absolute;left:797px;top:101px;width:61px;height:20px;line-height:20px;font-size:13px;color:#000;text-align:right;white-space:nowrap;overflow:hidden;line-height:19px">98,89</div>
<div style="position:absolute;left:861px;top:101px;width:61px;height:20px;line-height:20px;font-size:13px;color:#000;text-align:right;white-space:nowrap;overflow:hidden;line-height:19px">1194,08</div>
<div style="position:absolute;left:925px;top:101px;width:61px;height:20px;line-height:20px;font-size:13px;color:#000;text-align:right;white-space:nowrap;overflow:hidden;line-height:19px">686,5</div>
<div style="position:absolute;left:989px;top:101px;width:61px;height:20px;line-height:20px;font-size:13px;color:#000;text-align:right;white-space:nowrap;overflow:hidden;line-height:19px">120</div>
<div style="position:absolute;left:1053px;top:101px;width:61px;height:20px;line-height:20px;font-size:13px;color:#000;text-align:right;white-space:nowrap;overflow:hidden;line-height:19px">13426,29</div>
<div style="position:absolute;left:17px;top:121px;width:138px;height:20px;line-height:20px;font-size:13px;color:#000;text-align:left;white-space:nowrap;overflow:hidden;line-height:19px">05 - Bożena Szewczyk</div>
<div style="position:absolute;left:157px;top:121px;width:61px;height:20px;line-height:20px;font-size:13px;color:#000;text-align:right;white-space:nowrap;overflow:hidden;line-height:19px">1260</div>
<div style="position:absolute;left:221px;top:121px;width:61px;height:20px;line-height:20px;font-size:13px;color:#000;text-align:right;white-space:nowrap;overflow:hidden;line-height:19px">1080</div>
<div style="position:absolute;left:285px;top:121px;width:61px;height:20px;line-height:20px;font-size:13px;color:#000;text-align:right;white-space:nowrap;overflow:hidden;line-height:19px">1440</div>
<div style="position:absolute;left:349px;top:121px;width:61px;height:20px;line-height:20px;font-size:13px;color:#000;text-align:right;white-space:nowrap;overflow:hidden;line-height:19px">0</div>
<div style="position:absolute;left:413px;top:121px;width:61px;height:20px;line-height:20px;font-size:13px;color:#000;text-align:right;white-space:nowrap;overflow:hidden;line-height:19px">900</div>
<div style="position:absolute;left:477px;top:121px;width:61px;height:20px;line-height:20px;font-size:13px;color:#000;text-align:right;white-space:nowrap;overflow:hidden;line-height:19px">1485,18</div>
<div style="position:absolute;left:541px;top:121px;width:61px;height:20px;line-height:20px;font-size:13px;color:#000;text-align:right;white-space:nowrap;overflow:hidden;line-height:19px">2520</div>
<div style="position:absolute;left:605px;top:121px;width:61px;height:20px;line-height:20px;font-size:13px;color:#000;text-align:right;white-space:nowrap;overflow:hidden;line-height:19px">1080</div>
<div style="position:absolute;left:669px;top:121px;width:61px;height:20px;line-height:20px;font-size:13px;color:#000;text-align:right;white-space:nowrap;overflow:hidden;line-height:19px">189,1</div>
<div style="position:absolute;left:733px;top:121px;width:61px;height:20px;line-height:20px;font-size:13px;color:#000;text-align:right;white-space:nowrap;overflow:hidden;line-height:19px">-64,53</div>
<div style="position:absolute;left:797px;top:121px;width:61px;height:20px;line-height:20px;font-size:13px;color:#000;text-align:right;white-space:nowrap;overflow:hidden;line-height:19px">81,84</div>
<div style="position:absolute;left:861px;top:121px;width:61px;height:20px;line-height:20px;font-size:13px;color:#000;text-align:right;white-space:nowrap;overflow:hidden;line-height:19px">1125,55</div>
<div style="position:absolute;left:925px;top:121px;width:61px;height:20px;line-height:20px;font-size:13px;color:#000;text-align:right;white-space:nowrap;overflow:hidden;line-height:19px">0</div>
<div style="position:absolute;left:989px;top:121px;width:61px;height:20px;line-height:20px;font-size:13px;color:#000;text-align:right;white-space:nowrap;overflow:hidden;line-height:19px">120</div>
<div style="position:absolute;left:1053px;top:121px;width:61px;height:20px;line-height:20px;font-size:13px;color:#000;text-align:right;white-space:nowrap;overflow:hidden;line-height:19px">11217,14</div>
<div style="position:absolute;left:17px;top:141px;width:138px;height:20px;line-height:20px;font-size:13px;color:#000;text-align:left;white-space:nowrap;overflow:hidden;line-height:19px">01 (30%) - Klaudia Nowak</div>
<div style="position:absolute;left:157px;top:141px;width:61px;height:20px;line-height:20px;font-size:13px;color:#000;text-align:right;white-space:nowrap;overflow:hidden;line-height:19px">239,4</div>
<div style="position:absolute;left:221px;top:141px;width:61px;height:20px;line-height:20px;font-size:13px;color:#000;text-align:right;white-space:nowrap;overflow:hidden;line-height:19px">108</div>
<div style="position:absolute;left:285px;top:141px;width:61px;height:20px;line-height:20px;font-size:13px;color:#000;text-align:right;white-space:nowrap;overflow:hidden;line-height:19px">273,6</div>
<div style="position:absolute;left:349px;top:141px;width:61px;height:20px;line-height:20px;font-size:13px;color:#000;text-align:right;white-space:nowrap;overflow:hidden;line-height:19px">0</div>
<div style="position:absolute;left:413px;top:141px;width:61px;height:20px;line-height:20px;font-size:13px;color:#000;text-align:right;white-space:nowrap;overflow:hidden;line-height:19px">135</div>
<div style="position:absolute;left:477px;top:141px;width:61px;height:20px;line-height:20px;font-size:13px;color:#000;text-align:right;white-space:nowrap;overflow:hidden;line-height:19px">466,2</div>
<div style="position:absolute;left:541px;top:141px;width:61px;height:20px;line-height:20px;font-size:13px;color:#000;text-align:right;white-space:nowrap;overflow:hidden;line-height:19px">478,8</div>
<div style="position:absolute;left:605px;top:141px;width:61px;height:20px;line-height:20px;font-size:13px;color:#000;text-align:right;white-space:nowrap;overflow:hidden;line-height:19px">205,2</div>
<div style="position:absolute;left:669px;top:141px;width:61px;height:20px;line-height:20px;font-size:13px;color:#000;text-align:right;white-space:nowrap;overflow:hidden;line-height:19px">143,4</div>
<div style="position:absolute;left:733px;top:141px;width:61px;height:20px;line-height:20px;font-size:13px;color:#000;text-align:right;white-space:nowrap;overflow:hidden;line-height:19px">0,75</div>
<div style="position:absolute;left:797px;top:141px;width:61px;height:20px;line-height:20px;font-size:13px;color:#000;text-align:right;white-space:nowrap;overflow:hidden;line-height:19px">17,29</div>
<div style="position:absolute;left:861px;top:141px;width:61px;height:20px;line-height:20px;font-size:13px;color:#000;text-align:right;white-space:nowrap;overflow:hidden;line-height:19px">211,88</div>
<div style="position:absolute;left:925px;top:141px;width:61px;height:20px;line-height:20px;font-size:13px;color:#000;text-align:right;white-space:nowrap;overflow:hidden;line-height:19px">0</div>
<div style="position:absolute;left:989px;top:141px;width:61px;height:20px;line-height:20px;font-size:13px;color:#000;text-align:right;white-space:nowrap;overflow:hidden;line-height:19px">36</div>
<div style="position:absolute;left:1053px;top:141px;width:61px;height:20px;line-height:20px;font-size:13px;color:#000;text-align:right;white-space:nowrap;overflow:hidden;line-height:19px">2315,52</div>
<div style="position:absolute;left:17px;top:161px;width:138px;height:20px;line-height:20px;font-size:13px;color:#000;text-align:left;white-space:nowrap;overflow:hidden;line-height:19px">01 (45%) - Sylwia Nowak</div>
<div style="position:absolute;left:157px;top:161px;width:61px;height:20px;line-height:20px;font-size:13px;color:#000;text-align:right;white-space:nowrap;overflow:hidden;line-height:19px">359,1</div>
<div style="position:absolute;left:221px;top:161px;width:61px;height:20px;line-height:20px;font-size:13px;color:#000;text-align:right;white-space:nowrap;overflow:hidden;line-height:19px">162</div>
<div style="position:absolute;left:285px;top:161px;width:61px;height:20px;line-height:20px;font-size:13px;color:#000;text-align:right;white-space:nowrap;overflow:hidden;line-height:19px">410,4</div>
<div style="position:absolute;left:349px;top:161px;width:61px;height:20px;line-height:20px;font-size:13px;color:#000;text-align:right;white-space:nowrap;overflow:hidden;line-height:19px">0</div>
<div style="position:absolute;left:413px;top:161px;width:61px;height:20px;line-height:20px;font-size:13px;color:#000;text-align:right;white-space:nowrap;overflow:hidden;line-height:19px">202,56</div>
<div style="position:absolute;left:477px;top:161px;width:61px;height:20px;line-height:20px;font-size:13px;color:#000;text-align:right;white-space:nowrap;overflow:hidden;line-height:19px">699,36</div>
<div style="position:absolute;left:541px;top:161px;width:61px;height:20px;line-height:20px;font-size:13px;color:#000;text-align:right;white-space:nowrap;overflow:hidden;line-height:19px">718,2</div>
<div style="position:absolute;left:605px;top:161px;width:61px;height:20px;line-height:20px;font-size:13px;color:#000;text-align:right;white-space:nowrap;overflow:hidden;line-height:19px">307,8</div>
<div style="position:absolute;left:669px;top:161px;width:61px;height:20px;line-height:20px;font-size:13px;color:#000;text-align:right;white-space:nowrap;overflow:hidden;line-height:19px">215,07</div>
<div style="position:absolute;left:733px;top:161px;width:61px;height:20px;line-height:20px;font-size:13px;color:#000;text-align:right;white-space:nowrap;overflow:hidden;line-height:19px">1,12</div>
<div style="position:absolute;left:797px;top:161px;width:61px;height:20px;line-height:20px;font-size:13px;color:#000;text-align:right;white-space:nowrap;overflow:hidden;line-height:19px">25,94</div>
<div style="position:absolute;left:861px;top:161px;width:61px;height:20px;line-height:20px;font-size:13px;color:#000;text-align:right;white-space:nowrap;overflow:hidden;line-height:19px">317,82</div>
<div style="position:absolute;left:925px;top:161px;width:61px;height:20px;line-height:20px;font-size:13px;color:#000;text-align:right;white-space:nowrap;overflow:hidden;line-height:19px">0</div>
<div style="position:absolute;left:989px;top:161px;width:61px;height:20px;line-height:20px;font-size:13px;color:#000;text-align:right;white-space:nowrap;overflow:hidden;line-height:19px">54</div>
<div style="position:absolute;left:1053px;top:161px;width:61px;height:20px;line-height:20px;font-size:13px;color:#000;text-align:right;white-space:nowrap;overflow:hidden;line-height:19px">3473,37</div>
<div style="position:absolute;left:17px;top:181px;width:138px;height:20px;line-height:20px;font-size:13px;color:#000;text-align:left;white-space:nowrap;overflow:hidden;line-height:19px">01 (25%) - Ala Nowak</div>
<div style="position:absolute;left:157px;top:181px;width:61px;height:20px;line-height:20px;font-size:13px;color:#000;text-align:right;white-space:nowrap;overflow:hidden;line-height:19px">199,5</div>
<div style="position:absolute;left:221px;top:181px;width:61px;height:20px;line-height:20px;font-size:13px;color:#000;text-align:right;white-space:nowrap;overflow:hidden;line-height:19px">90</div>
<div style="position:absolute;left:285px;top:181px;width:61px;height:20px;line-height:20px;font-size:13px;color:#000;text-align:right;white-space:nowrap;overflow:hidden;line-height:19px">228</div>
<div style="position:absolute;left:349px;top:181px;width:61px;height:20px;line-height:20px;font-size:13px;color:#000;text-align:right;white-space:nowrap;overflow:hidden;line-height:19px">0</div>
<div style="position:absolute;left:413px;top:181px;width:61px;height:20px;line-height:20px;font-size:13px;color:#000;text-align:right;white-space:nowrap;overflow:hidden;line-height:19px">112,56</div>
<div style="position:absolute;left:477px;top:181px;width:61px;height:20px;line-height:20px;font-size:13px;color:#000;text-align:right;white-space:nowrap;overflow:hidden;line-height:19px">388,56</div>
<div style="position:absolute;left:541px;top:181px;width:61px;height:20px;line-height:20px;font-size:13px;color:#000;text-align:right;white-space:nowrap;overflow:hidden;line-height:19px">399</div>
<div style="position:absolute;left:605px;top:181px;width:61px;height:20px;line-height:20px;font-size:13px;color:#000;text-align:right;white-space:nowrap;overflow:hidden;line-height:19px">171</div>
<div style="position:absolute;left:669px;top:181px;width:61px;height:20px;line-height:20px;font-size:13px;color:#000;text-align:right;white-space:nowrap;overflow:hidden;line-height:19px">119,47</div>
<div style="position:absolute;left:733px;top:181px;width:61px;height:20px;line-height:20px;font-size:13px;color:#000;text-align:right;white-space:nowrap;overflow:hidden;line-height:19px">0,62</div>
<div style="position:absolute;left:797px;top:181px;width:61px;height:20px;line-height:20px;font-size:13px;color:#000;text-align:right;white-space:nowrap;overflow:hidden;line-height:19px">14,41</div>
<div style="position:absolute;left:861px;top:181px;width:61px;height:20px;line-height:20px;font-size:13px;color:#000;text-align:right;white-space:nowrap;overflow:hidden;line-height:19px">176,56</div>
<div style="position:absolute;left:925px;top:181px;width:61px;height:20px;line-height:20px;font-size:13px;color:#000;text-align:right;white-space:nowrap;overflow:hidden;line-height:19px">0</div>
<div style="position:absolute;left:989px;top:181px;width:61px;height:20px;line-height:20px;font-size:13px;color:#000;text-align:right;white-space:nowrap;overflow:hidden;line-height:19px">30</div>
<div style="position:absolute;left:1053px;top:181px;width:61px;height:20px;line-height:20px;font-size:13px;color:#000;text-align:right;white-space:nowrap;overflow:hidden;line-height:19px">1929,68</div>
<div style="position:absolute;left:17px;top:201px;width:138px;height:20px;line-height:20px;font-size:13px;color:#000;text-align:left;white-space:nowrap;overflow:hidden;line-height:19px">03 (50%) - Karol Dąbrowski</div>
<div style="position:absolute;left:157px;top:201px;width:61px;height:20px;line-height:20px;font-size:13px;color:#000;text-align:right;white-space:nowrap;overflow:hidden;line-height:19px">221,25</div>
<div style="position:absolute;left:221px;top:201px;width:61px;height:20px;line-height:20px;font-size:13px;color:#000;text-align:right;white-space:nowrap;overflow:hidden;line-height:19px">150</div>
<div style="position:absolute;left:285px;top:201px;width:61px;height:20px;line-height:20px;font-size:13px;color:#000;text-align:right;white-space:nowrap;overflow:hidden;line-height:19px">295</div>
<div style="position:absolute;left:349px;top:201px;width:61px;height:20px;line-height:20px;font-size:13px;color:#000;text-align:right;white-space:nowrap;overflow:hidden;line-height:19px">225</div>
<div style="position:absolute;left:413px;top:201px;width:61px;height:20px;line-height:20px;font-size:13px;color:#000;text-align:right;white-space:nowrap;overflow:hidden;line-height:19px">417,44</div>
<div style="position:absolute;left:477px;top:201px;width:61px;height:20px;line-height:20px;font-size:13px;color:#000;text-align:right;white-space:nowrap;overflow:hidden;line-height:19px">284,45</div>
<div style="position:absolute;left:541px;top:201px;width:61px;height:20px;line-height:20px;font-size:13px;color:#000;text-align:right;white-space:nowrap;overflow:hidden;line-height:19px">437,5</div>
<div style="position:absolute;left:605px;top:201px;width:61px;height:20px;line-height:20px;font-size:13px;color:#000;text-align:right;white-space:nowrap;overflow:hidden;line-height:19px">221,25</div>
<div style="position:absolute;left:669px;top:201px;width:61px;height:20px;line-height:20px;font-size:13px;color:#000;text-align:right;white-space:nowrap;overflow:hidden;line-height:19px">295,14</div>
<div style="position:absolute;left:733px;top:201px;width:61px;height:20px;line-height:20px;font-size:13px;color:#000;text-align:right;white-space:nowrap;overflow:hidden;line-height:19px">52,58</div>
<div style="position:absolute;left:797px;top:201px;width:61px;height:20px;line-height:20px;font-size:13px;color:#000;text-align:right;white-space:nowrap;overflow:hidden;line-height:19px">18,04</div>
<div style="position:absolute;left:861px;top:201px;width:61px;height:20px;line-height:20px;font-size:13px;color:#000;text-align:right;white-space:nowrap;overflow:hidden;line-height:19px">913,3</div>
<div style="position:absolute;left:925px;top:201px;width:61px;height:20px;line-height:20px;font-size:13px;color:#000;text-align:right;white-space:nowrap;overflow:hidden;line-height:19px">0</div>
<div style="position:absolute;left:989px;top:201px;width:61px;height:20px;line-height:20px;font-size:13px;color:#000;text-align:right;white-space:nowrap;overflow:hidden;line-height:19px">50</div>
<div style="position:absolute;left:1053px;top:201px;width:61px;height:20px;line-height:20px;font-size:13px;color:#000;text-align:right;white-space:nowrap;overflow:hidden;line-height:19px">3580,95</div>
<div style="position:absolute;left:17px;top:221px;width:138px;height:20px;line-height:20px;font-size:13px;color:#000;text-align:left;white-space:nowrap;overflow:hidden;line-height:19px">06 - Piotr Strzelczyk</div>
<div style="position:absolute;left:157px;top:221px;width:61px;height:20px;line-height:20px;font-size:13px;color:#000;text-align:right;white-space:nowrap;overflow:hidden;line-height:19px">0</div>
<div style="position:absolute;left:221px;top:221px;width:61px;height:20px;line-height:20px;font-size:13px;color:#000;text-align:right;white-space:nowrap;overflow:hidden;line-height:19px">0</div>
<div style="position:absolute;left:285px;top:221px;width:61px;height:20px;line-height:20px;font-size:13px;color:#000;text-align:right;white-space:nowrap;overflow:hidden;line-height:19px">0</div>
<div style="position:absolute;left:349px;top:221px;width:61px;height:20px;line-height:20px;font-size:13px;color:#000;text-align:right;white-space:nowrap;overflow:hidden;line-height:19px">0</div>
<div style="position:absolute;left:413px;top:221px;width:61px;height:20px;line-height:20px;font-size:13px;color:#000;text-align:right;white-space:nowrap;overflow:hidden;line-height:19px">28,92</div>
<div style="position:absolute;left:477px;top:221px;width:61px;height:20px;line-height:20px;font-size:13px;color:#000;text-align:right;white-space:nowrap;overflow:hidden;line-height:19px">0</div>
<div style="position:absolute;left:541px;top:221px;width:61px;height:20px;line-height:20px;font-size:13px;color:#000;text-align:right;white-space:nowrap;overflow:hidden;line-height:19px">0</div>
<div style="position:absolute;left:605px;top:221px;width:61px;height:20px;line-height:20px;font-size:13px;color:#000;text-align:right;white-space:nowrap;overflow:hidden;line-height:19px">0</div>
<div style="position:absolute;left:669px;top:221px;width:61px;height:20px;line-height:20px;font-size:13px;color:#000;text-align:right;white-space:nowrap;overflow:hidden;line-height:19px">0</div>
<div style="position:absolute;left:733px;top:221px;width:61px;height:20px;line-height:20px;font-size:13px;color:#000;text-align:right;white-space:nowrap;overflow:hidden;line-height:19px">0</div>
<div style="position:absolute;left:797px;top:221px;width:61px;height:20px;line-height:20px;font-size:13px;color:#000;text-align:right;white-space:nowrap;overflow:hidden;line-height:19px">10,79</div>
<div style="position:absolute;left:861px;top:221px;width:61px;height:20px;line-height:20px;font-size:13px;color:#000;text-align:right;white-space:nowrap;overflow:hidden;line-height:19px">999,55</div>
<div style="position:absolute;left:925px;top:221px;width:61px;height:20px;line-height:20px;font-size:13px;color:#000;text-align:right;white-space:nowrap;overflow:hidden;line-height:19px">0</div>
<div style="position:absolute;left:989px;top:221px;width:61px;height:20px;line-height:20px;font-size:13px;color:#000;text-align:right;white-space:nowrap;overflow:hidden;line-height:19px">100</div>
<div style="position:absolute;left:1053px;top:221px;width:61px;height:20px;line-height:20px;font-size:13px;color:#000;text-align:right;white-space:nowrap;overflow:hidden;line-height:19px">1139,26</div>
<div style="position:absolute;left:17px;top:241px;width:138px;height:20px;line-height:20px;font-size:13px;color:#000;text-align:left;white-space:nowrap;overflow:hidden;line-height:19px">LU - VAT - Magda VAT</div>
<div style="position:absolute;left:157px;top:241px;width:61px;height:20px;line-height:20px;font-size:13px;color:#000;text-align:right;white-space:nowrap;overflow:hidden;line-height:19px">0</div>
<div style="position:absolute;left:221px;top:241px;width:61px;height:20px;line-height:20px;font-size:13px;color:#000;text-align:right;white-space:nowrap;overflow:hidden;line-height:19px">0</div>
<div style="position:absolute;left:285px;top:241px;width:61px;height:20px;line-height:20px;font-size:13px;color:#000;text-align:right;white-space:nowrap;overflow:hidden;line-height:19px">0</div>
<div style="position:absolute;left:349px;top:241px;width:61px;height:20px;line-height:20px;font-size:13px;color:#000;text-align:right;white-space:nowrap;overflow:hidden;line-height:19px">0</div>
<div style="position:absolute;left:413px;top:241px;width:61px;height:20px;line-height:20px;font-size:13px;color:#000;text-align:right;white-space:nowrap;overflow:hidden;line-height:19px">0</div>
<div style="position:absolute;left:477px;top:241px;width:61px;height:20px;line-height:20px;font-size:13px;color:#000;text-align:right;white-space:nowrap;overflow:hidden;line-height:19px">0</div>
<div style="position:absolute;left:541px;top:241px;width:61px;height:20px;line-height:20px;font-size:13px;color:#000;text-align:right;white-space:nowrap;overflow:hidden;line-height:19px">0</div>
<div style="position:absolute;left:605px;top:241px;width:61px;height:20px;line-height:20px;font-size:13px;color:#000;text-align:right;white-space:nowrap;overflow:hidden;line-height:19px">0</div>
<div style="position:absolute;left:669px;top:241px;width:61px;height:20px;line-height:20px;font-size:13px;color:#000;text-align:right;white-space:nowrap;overflow:hidden;line-height:19px">171</div>
<div style="position:absolute;left:733px;top:241px;width:61px;height:20px;line-height:20px;font-size:13px;color:#000;text-align:right;white-space:nowrap;overflow:hidden;line-height:19px">0</div>
<div style="position:absolute;left:797px;top:241px;width:61px;height:20px;line-height:20px;font-size:13px;color:#000;text-align:right;white-space:nowrap;overflow:hidden;line-height:19px">0</div>
<div style="position:absolute;left:861px;top:241px;width:61px;height:20px;line-height:20px;font-size:13px;color:#000;text-align:right;white-space:nowrap;overflow:hidden;line-height:19px">0</div>
<div style="position:absolute;left:925px;top:241px;width:61px;height:20px;line-height:20px;font-size:13px;color:#000;text-align:right;white-space:nowrap;overflow:hidden;line-height:19px">0</div>
<div style="position:absolute;left:989px;top:241px;width:61px;height:20px;line-height:20px;font-size:13px;color:#000;text-align:right;white-space:nowrap;overflow:hidden;line-height:19px">0</div>
<div style="position:absolute;left:1053px;top:241px;width:61px;height:20px;line-height:20px;font-size:13px;color:#000;text-align:right;white-space:nowrap;overflow:hidden;line-height:19px">171</div>
<div style="position:absolute;left:17px;top:261px;width:138px;height:20px;line-height:20px;font-size:13px;color:#000;text-align:left;white-space:nowrap;overflow:hidden;line-height:19px">01 (70%) - do 31.07.2021</div>
<div style="position:absolute;left:157px;top:261px;width:61px;height:20px;line-height:20px;font-size:13px;color:#000;text-align:right;white-space:nowrap;overflow:hidden;line-height:19px">0</div>
<div style="position:absolute;left:221px;top:261px;width:61px;height:20px;line-height:20px;font-size:13px;color:#000;text-align:right;white-space:nowrap;overflow:hidden;line-height:19px">0</div>
<div style="position:absolute;left:285px;top:261px;width:61px;height:20px;line-height:20px;font-size:13px;color:#000;text-align:right;white-space:nowrap;overflow:hidden;line-height:19px">0</div>
<div style="position:absolute;left:349px;top:261px;width:61px;height:20px;line-height:20px;font-size:13px;color:#000;text-align:right;white-space:nowrap;overflow:hidden;line-height:19px">0</div>
<div style="position:absolute;left:413px;top:261px;width:61px;height:20px;line-height:20px;font-size:13px;color:#000;text-align:right;white-space:nowrap;overflow:hidden;line-height:19px">0</div>
<div style="position:absolute;left:477px;top:261px;width:61px;height:20px;line-height:20px;font-size:13px;color:#000;text-align:right;white-space:nowrap;overflow:hidden;line-height:19px">0</div>
<div style="position:absolute;left:541px;top:261px;width:61px;height:20px;line-height:20px;font-size:13px;color:#000;text-align:right;white-space:nowrap;overflow:hidden;line-height:19px">0</div>
<div style="position:absolute;left:605px;top:261px;width:61px;height:20px;line-height:20px;font-size:13px;color:#000;text-align:right;white-space:nowrap;overflow:hidden;line-height:19px">0</div>
<div style="position:absolute;left:669px;top:261px;width:61px;height:20px;line-height:20px;font-size:13px;color:#000;text-align:right;white-space:nowrap;overflow:hidden;line-height:19px">0</div>
<div style="position:absolute;left:733px;top:261px;width:61px;height:20px;line-height:20px;font-size:13px;color:#000;text-align:right;white-space:nowrap;overflow:hidden;line-height:19px">0</div>
<div style="position:absolute;left:797px;top:261px;width:61px;height:20px;line-height:20px;font-size:13px;color:#000;text-align:right;white-space:nowrap;overflow:hidden;line-height:19px">0,19</div>
<div style="position:absolute;left:861px;top:261px;width:61px;height:20px;line-height:20px;font-size:13px;color:#000;text-align:right;white-space:nowrap;overflow:hidden;line-height:19px">0</div>
<div style="position:absolute;left:925px;top:261px;width:61px;height:20px;line-height:20px;font-size:13px;color:#000;text-align:right;white-space:nowrap;overflow:hidden;line-height:19px">0</div>
<div style="position:absolute;left:989px;top:261px;width:61px;height:20px;line-height:20px;font-size:13px;color:#000;text-align:right;white-space:nowrap;overflow:hidden;line-height:19px">20</div>
<div style="position:absolute;left:1053px;top:261px;width:61px;height:20px;line-height:20px;font-size:13px;color:#000;text-align:right;white-space:nowrap;overflow:hidden;line-height:19px">20,19</div>
<div style="position:absolute;left:17px;top:281px;width:138px;height:20px;line-height:20px;font-size:13px;color:#000;text-align:left;white-space:nowrap;overflow:hidden;line-height:19px">Suma</div>
<div style="position:absolute;left:157px;top:281px;width:61px;height:20px;line-height:20px;font-size:13px;color:#000;text-align:right;white-space:nowrap;overflow:hidden;line-height:19px">5817</div>
<div style="position:absolute;left:221px;top:281px;width:61px;height:20px;line-height:20px;font-size:13px;color:#000;text-align:right;white-space:nowrap;overflow:hidden;line-height:19px">3960</div>
<div style="position:absolute;left:285px;top:281px;width:61px;height:20px;line-height:20px;font-size:13px;color:#000;text-align:right;white-space:nowrap;overflow:hidden;line-height:19px">6648</div>
<div style="position:absolute;left:349px;top:281px;width:61px;height:20px;line-height:20px;font-size:13px;color:#000;text-align:right;white-space:nowrap;overflow:hidden;line-height:19px">3240</div>
<div style="position:absolute;left:413px;top:281px;width:61px;height:20px;line-height:20px;font-size:13px;color:#000;text-align:right;white-space:nowrap;overflow:hidden;line-height:19px">5971,11</div>
<div style="position:absolute;left:477px;top:281px;width:61px;height:20px;line-height:20px;font-size:13px;color:#000;text-align:right;white-space:nowrap;overflow:hidden;line-height:19px">5830,98</div>
<div style="position:absolute;left:541px;top:281px;width:61px;height:20px;line-height:20px;font-size:13px;color:#000;text-align:right;white-space:nowrap;overflow:hidden;line-height:19px">10500</div>
<div style="position:absolute;left:605px;top:281px;width:61px;height:20px;line-height:20px;font-size:13px;color:#000;text-align:right;white-space:nowrap;overflow:hidden;line-height:19px">4986</div>
<div style="position:absolute;left:669px;top:281px;width:61px;height:20px;line-height:20px;font-size:13px;color:#000;text-align:right;white-space:nowrap;overflow:hidden;line-height:19px">2032,34</div>
<div style="position:absolute;left:733px;top:281px;width:61px;height:20px;line-height:20px;font-size:13px;color:#000;text-align:right;white-space:nowrap;overflow:hidden;line-height:19px">-82,39</div>
<div style="position:absolute;left:797px;top:281px;width:61px;height:20px;line-height:20px;font-size:13px;color:#000;text-align:right;white-space:nowrap;overflow:hidden;line-height:19px">387,94</div>
<div style="position:absolute;left:861px;top:281px;width:61px;height:20px;line-height:20px;font-size:13px;color:#000;text-align:right;white-space:nowrap;overflow:hidden;line-height:19px">5494,83</div>
<div style="position:absolute;left:925px;top:281px;width:61px;height:20px;line-height:20px;font-size:13px;color:#000;text-align:right;white-space:nowrap;overflow:hidden;line-height:19px">2059,5</div>
<div style="position:absolute;left:989px;top:281px;width:61px;height:20px;line-height:20px;font-size:13px;color:#000;text-align:right;white-space:nowrap;overflow:hidden;line-height:19px">720</div>
<div style="position:absolute;left:1053px;top:281px;width:61px;height:20px;line-height:20px;font-size:13px;color:#000;text-align:right;white-space:nowrap;overflow:hidden;line-height:19px">57565,31</div>
<svg style="position:absolute;left:0;top:0" width="14" height="19"><path d="M11 5V16H0z" fill="#bcbcbc"/></svg>
<div style="position:absolute;left:155px;top:18px;width:67px;height:2px;background:#217346"></div>
<div style="position:absolute;left:155px;top:39px;width:62px;height:2px;background:#217346"></div>
<div style="position:absolute;left:155px;top:18px;width:2px;height:23px;background:#217346"></div>
<div style="position:absolute;left:220px;top:18px;width:2px;height:18px;background:#217346"></div>
<div style="position:absolute;left:217px;top:36px;width:7px;height:7px;background:#fff"></div>
<div style="position:absolute;left:218px;top:37px;width:5px;height:5px;background:#217346"></div>
<div style="position:absolute;left:13px;top:19px;width:2px;height:20px;background:#217346"></div>
</div>
</body></html>
